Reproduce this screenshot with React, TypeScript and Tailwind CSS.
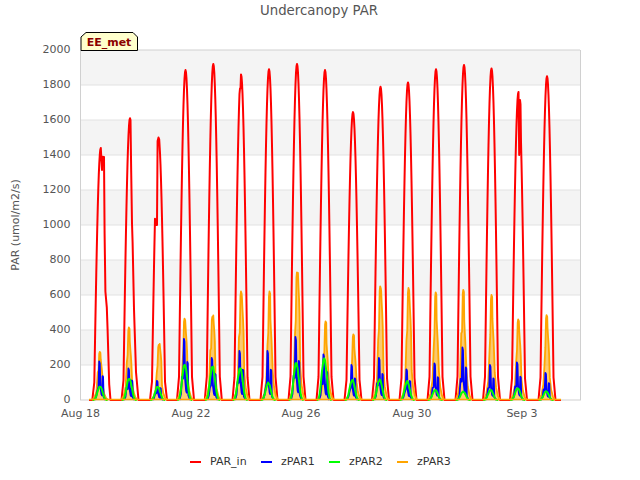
const FONT = '"DejaVu Sans", sans-serif';
const centers = [100.8, 130, 158.5, 185.5, 213.3, 241, 269, 297, 325, 353, 380.5, 408, 436, 464, 491.5, 518.5, 547];
const red = [1440, 1610, 1500, 1885, 1920, 1860, 1890, 1920, 1885, 1645, 1790, 1815, 1890, 1915, 1895, 1760, 1850];
const blue = [220, 180, 110, 350, 240, 280, 280, 360, 260, 200, 240, 175, 210, 300, 200, 215, 155];
const green = [80, 130, 80, 210, 200, 190, 100, 220, 250, 120, 120, 110, 60, 50, 60, 70, 50];
const orange = [275, 415, 315, 465, 475, 620, 620, 730, 450, 375, 650, 640, 615, 630, 600, 460, 485];

const Y = (v: number) => 400 - v * 0.175;
const jag = (i: number, k: number) => {
  const s = Math.sin(i * 12.9898 + k * 78.233) * 43758.5453;
  return s - Math.floor(s);
};

function shape(t: number) {
  const a = Math.abs(t);
  if (a < 6.5) return Math.cos((Math.PI * a) / 13.6);
  return Math.max(0, (0.07 * (8.5 - a)) / 2);
}

function redPath() {
  let d = "M 89 400";
  centers.forEach((c, i) => {
    const pts: [number, number][] = [];
    for (let k = -17; k <= 17; k++) {
      const t = k * 0.5;
      pts.push([c + t, red[i] * shape(t)]);
    }
    let use = pts;
    if (i === 0) {
      use = pts.filter(([x]) => x < 101);
      use.push([102, 1315], [102.2, 1390], [104, 1388], [104.6, 950], [105.4, 620], [106.8, 530], [107.6, 400], [109.2, 90], [110.5, 0]);
    }
    if (i === 1) {
      use = pts.filter(([x]) => x <= 130.5);
      use.push([131.2, 1300], [132, 1010], [132.6, 900], [134, 520], [136, 160], [138.5, 0]);
    }
    if (i === 2) {
      const left = pts.filter(([x]) => x < 155.5);
      const right = pts.filter(([x]) => x > 159.5);
      use = [...left, [156, 1000], [157, 1000], [157.6, 1480], [158.5, 1500], [159.2, 1490], ...right];
    }
    if (i === 5) {
      use = use.map(([x, v]) => (x > 239 && x < 240.8 ? [x, Math.min(v, 1780)] : [x, v]));
    }
    if (i === 15) {
      const left = pts.filter(([x]) => x <= 518.5);
      const right = pts.filter(([x]) => x >= 521);
      use = [...left, [519.2, 1400], [520, 1715], [520.5, 1690], ...right];
    }
    use.forEach(([x, v]) => {
      d += ` L ${x.toFixed(2)} ${Y(v).toFixed(1)}`;
    });
  });
  return d + " L 561 400";
}

function orangePath() {
  let d = "";
  centers.forEach((c, i) => {
    const p = orange[i];
    const sh = 0.5 + 0.35 * jag(i + 1, 3);
    const dx = -1 + 2 * jag(i + 1, 5);
    const pts: [number, number][] = [
      [-8, 0], [-5.5, 0.06], [-3.6, 0.18], [-2.4, 0.35 + 0.3 * jag(i + 1, 1)], [-1.6, 0.62], [-0.9, 0.96], [-0.4, 1], [0.3, 0.98], [0.6, sh + 0.2], [1.1, sh + 0.1], [1.7, sh],
      [2.2, sh - 0.12], [2.9, 0.26], [4.2, 0.12], [6, 0.04], [8, 0],
    ];
    d += (i ? " " : "") + "M " + pts.map(([t, r]) => `${(c + dx + t).toFixed(2)} ${Y(p * r).toFixed(1)}`).join(" L ");
  });
  return d;
}

function bluePath() {
  let d = "";
  centers.forEach((c, i) => {
    const p = blue[i];
    const pts: [number, number][] = [
      [-5, 0], [-3.5, 0.1], [-2.4, 0.22 + 0.2 * jag(i + 1, 7)], [-1.3, 0.35], [-0.6, 1], [0, 0.95], [0.6, 0.35], [1.6, 0.15], [2.2, 0.12], [2.8, 0.62], [3.3, 0.6], [3.8, 0.08], [5.5, 0],
    ];
    d += (i ? " " : "") + "M " + pts.map(([t, r]) => `${(c - 1 + t).toFixed(2)} ${Y(p * r).toFixed(1)}`).join(" L ");
  });
  return d;
}

function greenPath() {
  let d = "";
  centers.forEach((c, i) => {
    const p = green[i];
    const w = 7.5;
    const pts: string[] = [];
    for (let t = -w; t <= w + 0.01; t += 0.75) {
      const base = Math.pow(Math.cos((Math.PI * t) / (2 * w)), 3.5);
      pts.push(`${(c - 0.8 + t).toFixed(2)} ${Y(p * base * (0.92 + 0.08 * jag(i + 1, t * 4 + 30))).toFixed(1)}`);
    }
    d += (i ? " " : "") + "M " + pts.join(" L ");
  });
  return d;
}

const bands = [50, 120, 190, 260, 330];
const yTicks = [0, 200, 400, 600, 800, 1000, 1200, 1400, 1600, 1800, 2000];
const xTicks: [number, string][] = [
  [80.5, "Aug 18"],
  [191, "Aug 22"],
  [301, "Aug 26"],
  [412, "Aug 30"],
  [522, "Sep 3"],
];
const legend: [string, string][] = [
  ["#ff0000", "PAR_in"],
  ["#0000ff", "zPAR1"],
  ["#00ff00", "zPAR2"],
  ["#ffa500", "zPAR3"],
];

export default function App() {
  return (
    <div className="flex h-[480px] w-[640px] flex-col overflow-hidden bg-white" style={{ fontFamily: FONT }}>
      <div className="flex h-[32px] items-start justify-center pr-[2px] pt-[3px] text-[13.3px] leading-[16px] text-[#555555]">
        Undercanopy PAR
      </div>
      <svg className="block shrink-0" width="640" height="420" viewBox="0 32 640 420">
        <rect x="81" y="50" width="499" height="350" fill="#ffffff" />
        {bands.map((y) => (
          <rect key={y} x="81" y={y} width="499" height="35" fill="#f4f4f4" />
        ))}
        {yTicks.map((v) => (
          <line key={v} x1="81" x2="580" y1={Y(v)} y2={Y(v)} stroke={v === 0 || v === 2000 ? "#d0d0d0" : "#e2e2e2"} strokeWidth="1" />
        ))}
        <line x1="80.5" x2="80.5" y1="50" y2="400.5" stroke="#d0d0d0" />
        <line x1="580.5" x2="580.5" y1="50" y2="400.5" stroke="#d0d0d0" />

        <path d={redPath()} fill="none" stroke="#ff0000" strokeWidth="2" strokeLinejoin="round" />
        <path d={orangePath()} fill="#ffa500" fillOpacity="0.55" stroke="#ffa500" strokeWidth="1.8" strokeLinejoin="round" />
        <path d={bluePath()} fill="none" stroke="#0000ff" strokeWidth="1.8" strokeLinejoin="round" />
        <path d={greenPath()} fill="none" stroke="#00ff00" strokeWidth="2" strokeLinejoin="round" />
        <line x1="89" x2="561" y1="399.5" y2="399.5" stroke="#ffa500" strokeWidth="1.5" />

        {yTicks.map((v) => (
          <text key={v} x="70.5" y={Y(v) + 3} textAnchor="end" fontSize="11" fill="#555555">
            {v}
          </text>
        ))}
        {xTicks.map(([x, label]) => (
          <text key={label} x={x} y="417" textAnchor="middle" fontSize="11" fill="#555555">
            {label}
          </text>
        ))}
        <text x="18.5" y="225" textAnchor="middle" fontSize="11" fill="#555555" transform="rotate(-90 18.5 225)">
          PAR (umol/m2/s)
        </text>

        <polygon points="81,50.5 81,37 86,32.5 133,32.5 137.5,37 137.5,50.5" fill="#ffffcc" stroke="#000000" strokeWidth="1" strokeLinejoin="miter" />
        <text x="109" y="46" textAnchor="middle" fontSize="11" fontWeight="700" fill="#8b0000">
          EE_met
        </text>
      </svg>
      <div className="grid h-[20px] grid-cols-[71px_68px_68px_auto] items-center pl-[190px] text-[11px] leading-[14px] text-[#333333]">
        {legend.map(([color, label]) => (
          <div key={label} className="flex items-center">
            <span className="mr-[9px] h-[2px] w-[11px]" style={{ backgroundColor: color }} />
            <span>{label}</span>
          </div>
        ))}
      </div>
    </div>
  );
}
